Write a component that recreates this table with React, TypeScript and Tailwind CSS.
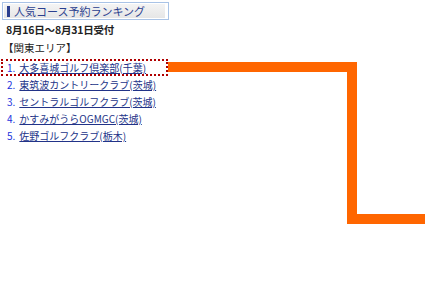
const ranking = [
  { no: 1, name: "大多喜城ゴルフ倶楽部(千葉)" },
  { no: 2, name: "東筑波カントリークラブ(茨城)" },
  { no: 3, name: "セントラルゴルフクラブ(茨城)" },
  { no: 4, name: "かすみがうらOGMGC(茨城)" },
  { no: 5, name: "佐野ゴルフクラブ(栃木)" },
];

export default function App() {
  return (
    <div
      className="relative h-[295px] w-[425px] overflow-hidden bg-white text-[11px] text-[#222]"
      style={{ fontFamily: '"Noto Sans CJK JP", "Noto Sans", sans-serif' }}
    >
      <div className="flex w-[169px] flex-col pl-[2px] pt-[2px]">
        {/* section title */}
        <div className="flex h-[18px] w-[167px] items-center border border-[#a9c3e6] bg-white p-[1px]">
          <div className="flex h-full w-[161px] items-center gap-[4px] bg-gradient-to-b from-[#f4f4f4] to-[#e6e6e6] pl-[3px]">
            <span className="h-[11px] w-[3px] bg-[#2b3f8f]" />
            <span className="whitespace-nowrap leading-none text-[#2b3f8f]">人気コース予約ランキング</span>
          </div>
        </div>

        <p className="mt-[2px] h-[16px] whitespace-nowrap pl-[4px] text-[10.5px] font-bold leading-[16px] tracking-[-0.2px]">
          8月16日～8月31日受付
        </p>
        <p className="mt-[2px] h-[16px] whitespace-nowrap pl-[1px] text-[10.5px] leading-[16px]">【関東エリア】</p>

        <ul className="mt-[3px] -ml-[1px] flex flex-col">
          {ranking.map((item) => (
            <li
              key={item.no}
              className={
                item.no === 1
                  ? "flex h-[17px] w-[167px] items-center whitespace-nowrap border-2 border-dotted border-[#b00000] pl-[4px] text-[10px]"
                  : "flex h-[17px] w-[167px] items-center whitespace-nowrap border-2 border-dotted border-transparent pl-[4px] text-[10px]"
              }
            >
              <span className="mr-[4px] text-[#2233dd]">{item.no}.</span>
              <a href="#" className="text-[#223388] underline underline-offset-1">
                {item.name}
              </a>
            </li>
          ))}
        </ul>
      </div>

      {/* orange connector */}
      <svg className="absolute left-0 top-0" width="425" height="295">
        <polyline
          points="168,67 352,67 352,219 425,219"
          fill="none"
          stroke="#ff6600"
          strokeWidth="10"
          strokeLinejoin="miter"
        />
      </svg>
    </div>
  );
}
